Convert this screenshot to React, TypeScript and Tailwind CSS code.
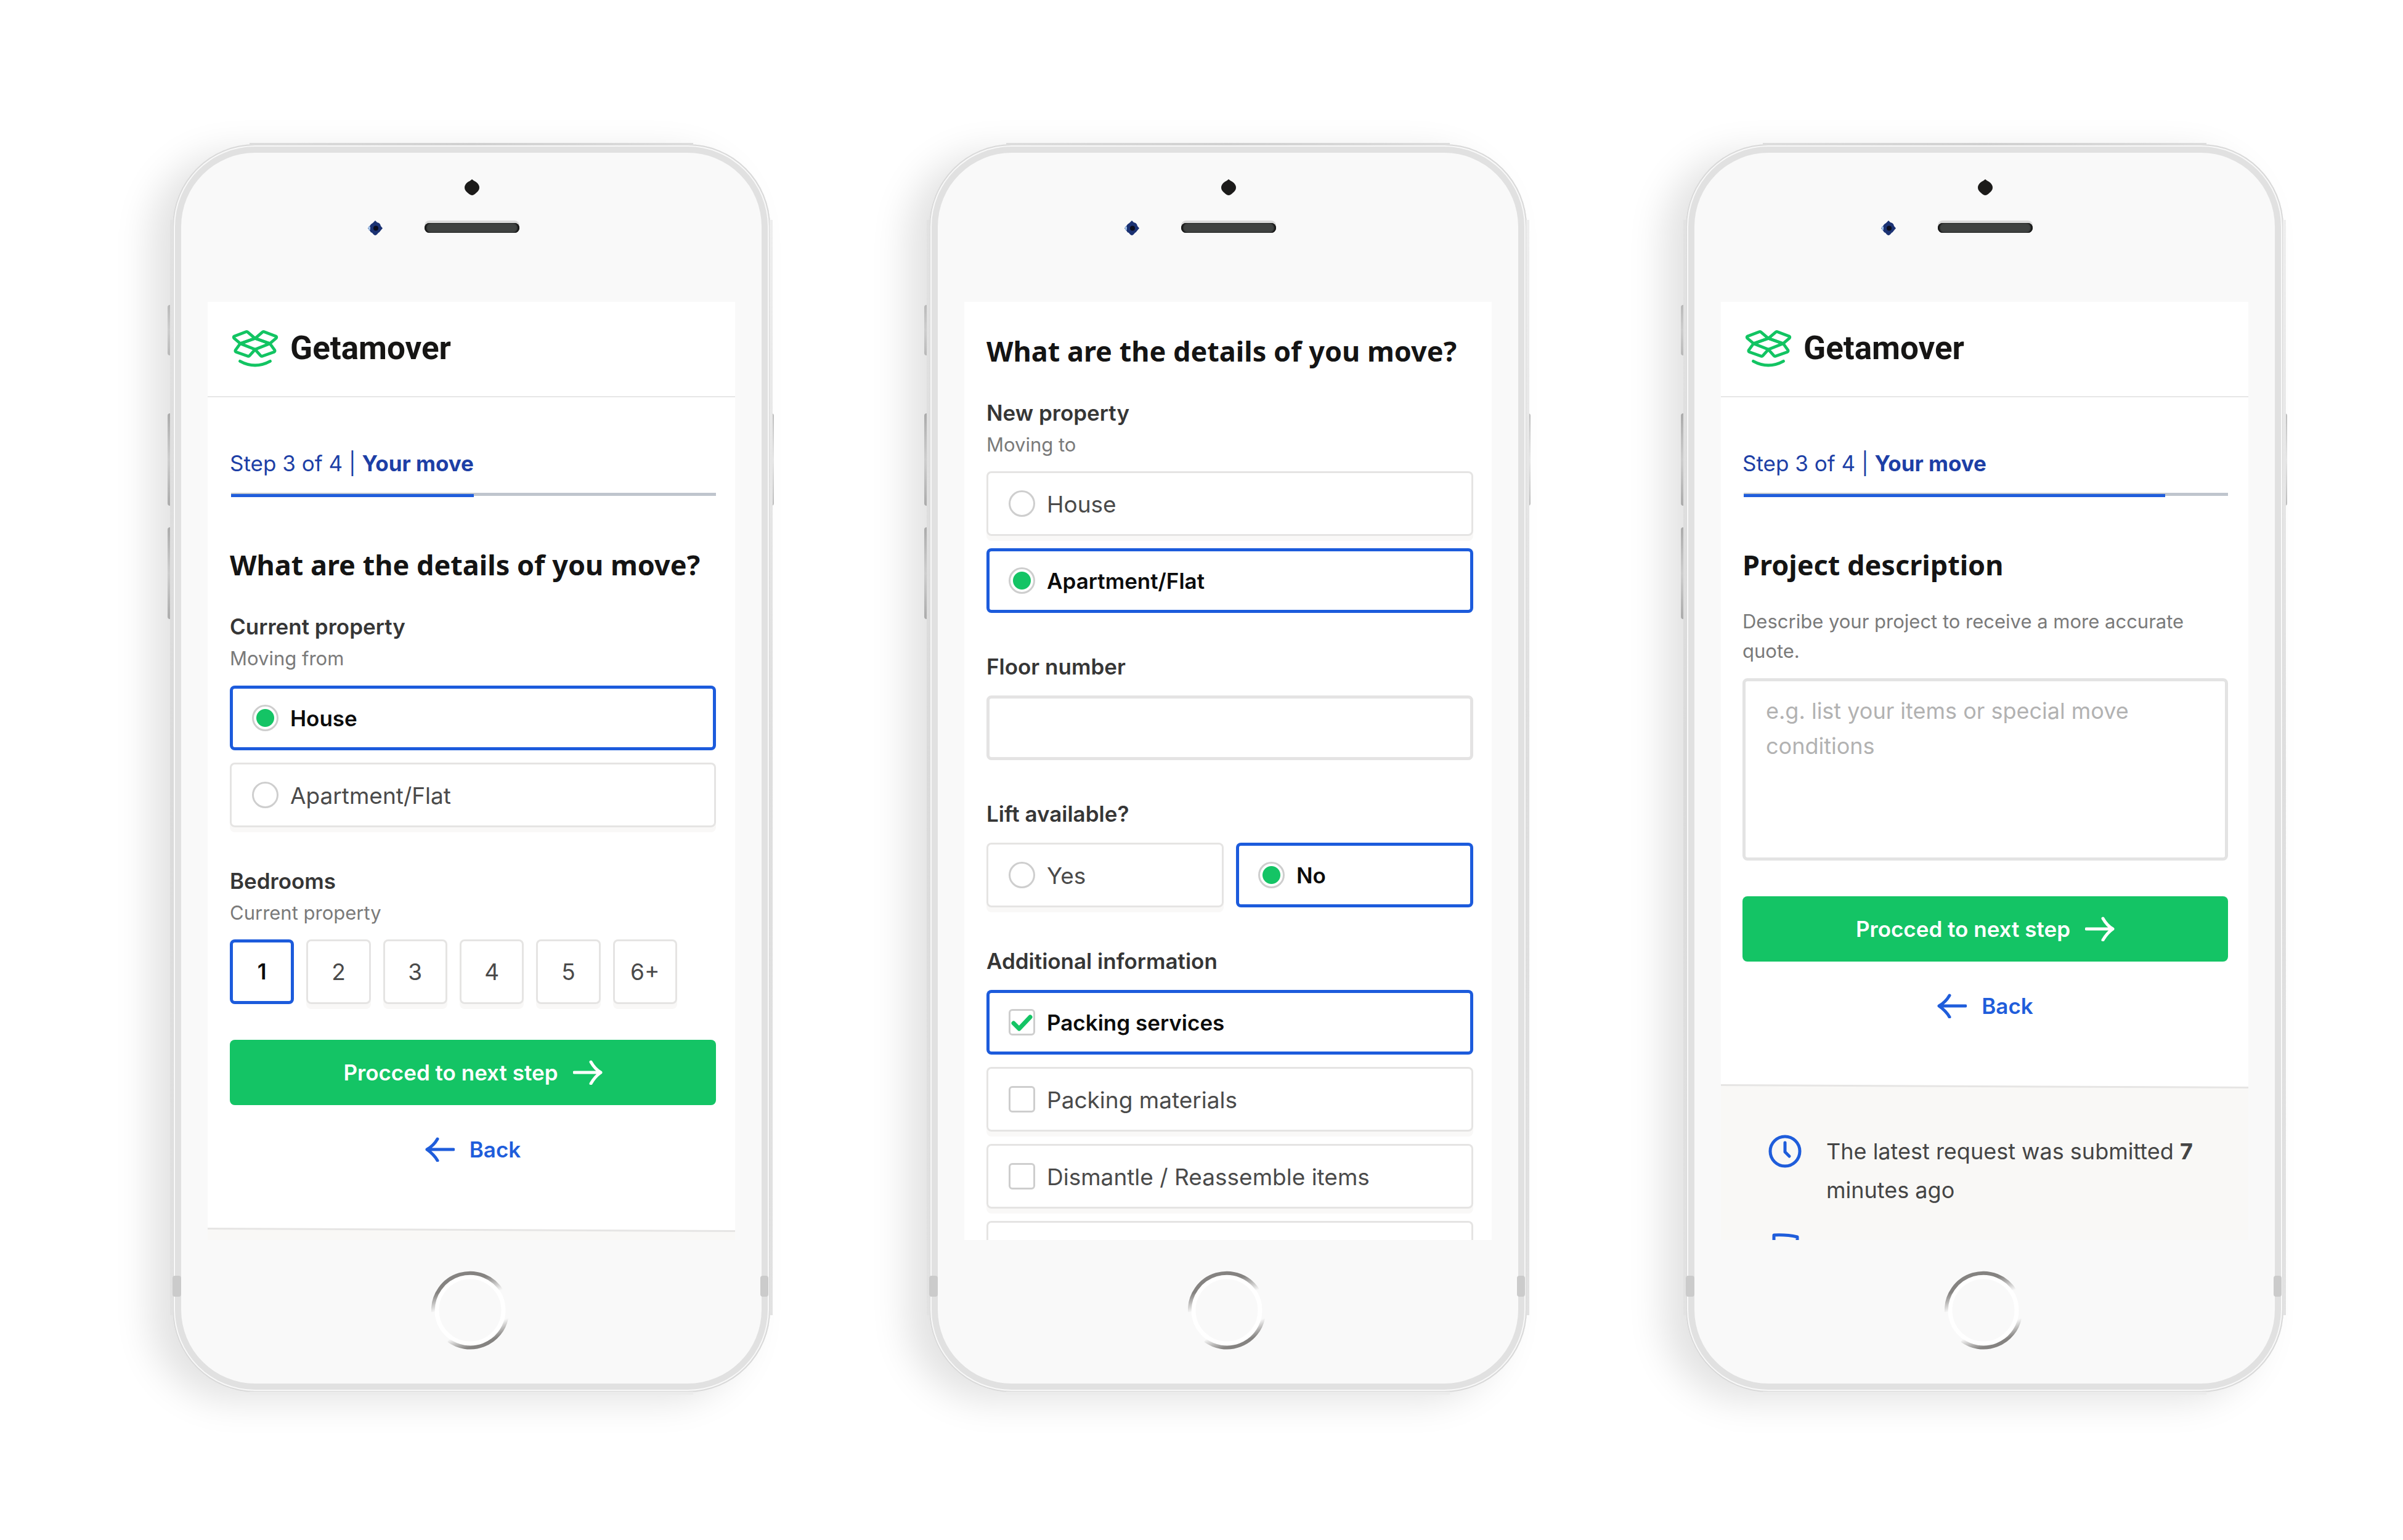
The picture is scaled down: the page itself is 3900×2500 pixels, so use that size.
import { useId, type ReactNode } from "react";

function Arrow({ back = false }: { back?: boolean }) {
  return (
    <svg viewBox="0 0 48 40" className="h-10 w-12 shrink-0" fill="none" stroke="currentColor" strokeWidth="5" strokeLinecap="round" strokeLinejoin="round" aria-hidden="true">
      <path d={back ? "M46 20H3M20 3C16 10 10 16 3 20C10 25 16 31 20 38" : "M2 20H45M29 3C33 10 38 16 45 20C38 25 33 31 29 38"} />
    </svg>
  );
}

function LogoMark() {
  return (
    <svg viewBox="0 0 80 63" className="h-[63px] w-20 shrink-0" fill="none" stroke="#12c462" strokeWidth="4.8" strokeLinecap="round" strokeLinejoin="round" aria-hidden="true">
      <path d="M41 15.3L29 5.2Q27.500 4 26 4.700L7.600 11.700Q5.200 13 6.800 15L17 23.700Z" />
      <path d="M41 15.300L53 5.200Q54.500 4 56 4.700L74.400 11.700Q76.800 13 75.200 15L65 23.700Z" />
      <path d="M41 15.300L17 23.700L41 33.300L65 23.700Z" />
      <path d="M17 23.700L9.200 34.300Q8.200 36.500 10.400 37.500L29.500 44.200Q31 44.700 32 43.400L41 33.300" />
      <path d="M65 23.700L72.800 34.300Q73.800 36.500 71.600 37.500L52.500 44.200Q51 44.700 50 43.400L41 33.300" />
      <path d="M16.500 52.300Q41 65.700 65.500 52.300" />
    </svg>
  );
}

function BrandHeader() {
  return (
    <header className="flex h-[155px] items-center gap-[18px] border-b-2 border-[#e6e6e6] pb-0.5 pl-9">
      <LogoMark />
      <span className="pb-0.5 font-['Roboto',sans-serif] text-[53px] leading-[60px] font-bold text-[#161514]">Getamover</span>
    </header>
  );
}

function StepProgress({ value }: { value: number }) {
  return (
    <div className="pt-20">
      <p className="text-[35px] leading-[54px] text-[#1d3fa6]">
        Step 3 of 4 | <b className="font-bold">Your move</b>
      </p>
      <div role="progressbar" aria-label="Progress" aria-valuenow={value} aria-valuemin={0} aria-valuemax={100} className="relative mt-[21px] ml-0.5 h-[5px] bg-[#bfc5cd]">
        <div className="absolute top-0.5 left-0 h-[5px] bg-[#1f5ddb]" style={{ width: `${value}%` }} />
      </div>
    </div>
  );
}

function Heading({ children }: { children: ReactNode }) {
  return <h2 className="font-['Noto_Sans',sans-serif] text-[45px] leading-[60px] font-bold whitespace-nowrap text-[#141414]">{children}</h2>;
}

function FieldTitle({ title, hint }: { title: string; hint?: string }) {
  return (
    <>
      <span className="block text-[35px] leading-[44px] font-semibold text-[#363636]">{title}</span>
      {hint && <span className="mt-2 block text-[31px] leading-[44px] text-[#7a7a7a]">{hint}</span>}
    </>
  );
}

type OptionProps = { kind: "radio" | "checkbox"; group: string; label: string; selected?: boolean };

function Option({ kind, group, label, selected = false }: OptionProps) {
  return (
    <label
      className={
        selected
          ? "flex h-[105px] items-center gap-[19px] rounded-lg px-9 text-[35px] font-semibold text-[#0c0c0c] shadow-[inset_0_0_0_5px_#1c5bdc]"
          : "flex h-[105px] items-center gap-[19px] rounded-lg px-9 text-[37px] text-[#4a4a4a] shadow-[inset_0_0_0_3px_#e5e4e3,0_8px_0_#f9f8f7]"
      }
    >
      {kind === "radio" ? (
        <input
          type="radio"
          name={group}
          defaultChecked={selected}
          className="size-[43px] shrink-0 appearance-none rounded-full border-[3px] border-[#cecece] bg-center bg-no-repeat checked:bg-[radial-gradient(circle,#14c465_14px,transparent_15px)]"
        />
      ) : (
        <span className="relative flex shrink-0">
          <input type="checkbox" name={group} defaultChecked={selected} className="peer size-[43px] appearance-none rounded-md border-[3px] border-[#cecece]" />
          <svg viewBox="0 0 43 43" className="pointer-events-none absolute inset-0 hidden peer-checked:block" fill="none" stroke="#14c465" strokeWidth="7" strokeLinecap="round" strokeLinejoin="round" aria-hidden="true">
            <path d="M8 23L17 32L35 13" />
          </svg>
        </span>
      )}
      <span className="pt-0.5 whitespace-nowrap">{label}</span>
    </label>
  );
}

function Actions() {
  return (
    <div className="mt-[58px] flex flex-col items-center">
      <button type="button" className="flex h-[106px] w-full items-center justify-center gap-6 rounded-lg bg-[#14c465] text-[35px] font-semibold text-white">
        Procced to next step
        <Arrow />
      </button>
      <a href="#back" className="mt-[50px] flex items-center gap-6 text-[35px] leading-[44px] font-semibold text-[#1f5ddb]">
        <Arrow back />
        Back
      </a>
    </div>
  );
}

function Facts({ children }: { children?: ReactNode }) {
  return (
    <footer className="mt-[105px]">
      <svg viewBox="0 0 856 8" preserveAspectRatio="none" className="block h-2 w-full" aria-hidden="true">
        <path d="M0 1L856 5V8H0Z" fill="#f9f8f6" />
        <path d="M0 1.500L856 5.500" stroke="#e6e5e4" strokeWidth="3" />
      </svg>
      <div className="min-h-[400px] bg-[#f9f8f6]">{children}</div>
    </footer>
  );
}

function HomeButton() {
  const id = useId();
  return (
    <button type="button" aria-label="Home" className="size-[130px] rounded-full">
      <svg viewBox="0 0 130 130" fill="none" aria-hidden="true">
        <defs>
          <linearGradient id={`${id}a`} gradientUnits="userSpaceOnUse" x1="60" y1="50" x2="51" y2="23">
            <stop offset="0" stopColor="#858381" stopOpacity="0" />
            <stop offset="1" stopColor="#858381" />
          </linearGradient>
          <linearGradient id={`${id}b`} gradientUnits="userSpaceOnUse" x1="77" y1="95" x2="85" y2="117">
            <stop offset="0" stopColor="#858381" stopOpacity="0" />
            <stop offset="1" stopColor="#858381" />
          </linearGradient>
        </defs>
        <circle cx="63" cy="65" r="54" stroke="#ffffff" strokeWidth="7" />
        <path d="M3 68A60 60 0 0 1 115 35" stroke={`url(#${id}a)`} strokeWidth="6" />
        <path d="M122 78A60 60 0 0 1 28 114" stroke={`url(#${id}b)`} strokeWidth="6" />
      </svg>
    </button>
  );
}

function Phone({ children }: { children: ReactNode }) {
  return (
    <section className="relative px-1 py-0.5">
      {/* hardware keys */}
      <i className="absolute top-[263px] -left-1 h-[82px] w-[7px] rounded-l bg-linear-to-b from-[#cccccc] via-[#e4e4e4] to-[#cccccc]" />
      <i className="absolute top-[439px] -left-1 h-[150px] w-[7px] rounded-l bg-linear-to-b from-[#bdbdbd] via-[#e4e4e4] to-[#bdbdbd]" />
      <i className="absolute top-[624px] -left-1 h-[149px] w-[7px] rounded-l bg-linear-to-b from-[#bdbdbd] via-[#e4e4e4] to-[#bdbdbd]" />
      <i className="absolute top-[439px] -right-0.5 h-[150px] w-2 rounded-r bg-linear-to-b from-[#bdbdbd] via-[#e8e8e8] to-[#bdbdbd]" />

      <div className="relative rounded-[134px] bg-[#f9f9f9] px-[57px] shadow-[inset_0_0_0_2px_#d9d9d9,inset_0_0_0_4px_#f8f8f8,inset_0_0_0_14px_#e1e1e1,-36px_14px_60px_rgba(0,0,0,0.115)]">
        {/* outer lips of the frame */}
        <i className="absolute top-[123px] bottom-[125px] -left-1 w-[5px] bg-linear-to-b from-[#e2e2e2] via-[#dadada] to-[#e2e2e2]" />
        <i className="absolute top-[123px] -right-1 bottom-[125px] w-[5px] bg-linear-to-b from-[#eeeeee] via-[#dedede] to-[#e2e2e2]" />
        <i className="absolute -top-0.5 right-[125px] left-[125px] h-1 bg-linear-to-r from-[#dddddd] via-[#d0d0d0] to-[#dddddd]" />
        <i className="absolute right-[125px] -bottom-1 left-[125px] h-[5px] bg-[#ebebeb]" />
        {/* antenna bands */}
        <i className="absolute bottom-[155px] left-0 h-[34px] w-[14px] rounded-sm bg-[#cbcbcb]" />
        <i className="absolute right-[3px] bottom-[155px] h-[34px] w-[13px] rounded-sm bg-[#cbcbcb]" />

        <div className="h-64 pt-[56px]">
          <div className="flex justify-center pl-0.5">
            <svg viewBox="0 0 26 28" className="block h-7 w-[26px]" aria-hidden="true">
              <path d="M13 1Q15 3 19 5Q25 9 25 14.500Q25 19 20 23Q16 27 13 27Q10 27 6 23Q1 19 1 14.500Q1 9 7 5Q11 3 13 1Z" fill="#1c1b1a" />
            </svg>
          </div>
          <div className="mt-10 grid grid-cols-[1fr_154px_1fr] items-center pl-0.5">
            <svg viewBox="0 0 24 24" className="mr-[68px] size-6 justify-self-end" aria-hidden="true">
              <path d="M12 0Q14 3 18 4Q21 6 21 9L24 12.500L21 16Q19 19 17 20Q14 24 12 24Q10 24 7 20Q4 19 3 16L0 12.500L3 9Q4 6 8 4Z" fill="#1b3273" />
              <path d="M1 9L4 10V15L1 16Z" fill="#9fbfe6" />
              <circle cx="13" cy="12.500" r="4" fill="#0a0d1e" />
            </svg>
            <span className="h-4 rounded-full bg-[#3f4241] shadow-[inset_3px_0_2px_#161616,inset_-3px_0_2px_#161616,0_-4px_0_#dadada]" />
          </div>
        </div>
        <div className="aspect-[856/1523] overflow-hidden bg-white">{children}</div>
        <div className="flex h-[247px] justify-center pt-[49px]">
          <div>
            <HomeButton />
          </div>
        </div>
      </div>
    </section>
  );
}

function CurrentPropertyScreen() {
  return (
    <>
      <BrandHeader />
      <form className="pr-[31px] pl-9">
        <StepProgress value={50} />
        <div className="mt-[82px]">
          <Heading>What are the details of you move?</Heading>
        </div>
        <fieldset className="mt-12">
          <legend className="contents">
            <FieldTitle title="Current property" hint="Moving from" />
          </legend>
          <div className="mt-[22px] flex flex-col gap-5">
            <Option kind="radio" group="from" label="House" selected />
            <Option kind="radio" group="from" label="Apartment/Flat" />
          </div>
        </fieldset>
        <fieldset className="mt-[65px]">
          <legend className="contents">
            <FieldTitle title="Bedrooms" hint="Current property" />
          </legend>
          <div className="mt-[21px] grid w-[92%] grid-cols-6 gap-5">
            {["1", "2", "3", "4", "5", "6+"].map((n, i) => (
              <button
                key={n}
                type="button"
                aria-pressed={i === 0}
                className={
                  i === 0
                    ? "h-[105px] rounded-lg text-[35px] font-semibold text-[#0c0c0c] shadow-[inset_0_0_0_5px_#1c5bdc]"
                    : "h-[105px] rounded-lg text-[37px] text-[#4a4a4a] shadow-[inset_0_0_0_3px_#e5e4e3,0_8px_0_#f9f8f7]"
                }
              >
                {n}
              </button>
            ))}
          </div>
        </fieldset>
        <Actions />
      </form>
      <Facts />
    </>
  );
}

function NewPropertyScreen() {
  return (
    <form className="pt-[50px] pr-[30px] pl-9">
      <Heading>What are the details of you move?</Heading>
      <fieldset className="mt-12">
        <legend className="contents">
          <FieldTitle title="New property" hint="Moving to" />
        </legend>
        <div className="mt-[21px] flex flex-col gap-5">
          <Option kind="radio" group="to" label="House" />
          <Option kind="radio" group="to" label="Apartment/Flat" selected />
        </div>
      </fieldset>
      <div className="mt-[65px]">
        <label htmlFor="floor">
          <FieldTitle title="Floor number" />
        </label>
        <input id="floor" type="text" className="mt-[25px] block h-[105px] w-full rounded-lg border-[5px] border-[#e4e3e3] px-8 text-[37px] text-[#4a4a4a] outline-none" />
      </div>
      <fieldset className="mt-[65px]">
        <legend className="contents">
          <FieldTitle title="Lift available?" />
        </legend>
        <div className="mt-[25px] grid grid-cols-2 gap-5">
          <Option kind="radio" group="lift" label="Yes" />
          <Option kind="radio" group="lift" label="No" selected />
        </div>
      </fieldset>
      <fieldset className="mt-[65px]">
        <legend className="contents">
          <FieldTitle title="Additional information" />
        </legend>
        <div className="mt-[25px] flex flex-col gap-5">
          <Option kind="checkbox" group="packing" label="Packing services" selected />
          <Option kind="checkbox" group="materials" label="Packing materials" />
          <Option kind="checkbox" group="dismantle" label="Dismantle / Reassemble items" />
          <Option kind="checkbox" group="extra" label="" />
        </div>
      </fieldset>
    </form>
  );
}

function DescriptionScreen() {
  return (
    <>
      <BrandHeader />
      <form className="pr-[33px] pl-[35px]">
        <StepProgress value={87} />
        <div className="mt-[82px]">
          <Heading>Project description</Heading>
        </div>
        <label htmlFor="description" className="mt-[38px] block text-[31px] leading-[48px] text-[#7a7a7a]">
          Describe your project to receive a more accurate quote.
        </label>
        <textarea
          id="description"
          placeholder="e.g. list your items or special move conditions"
          className="mt-5 block h-[296px] w-full resize-none rounded-lg border-[5px] border-[#e3e3e3] px-[33px] py-5 text-[36px] leading-[57px] outline-none placeholder:text-[#b2b2b2]"
        />
        <Actions />
      </form>
      <Facts>
        <ul className="flex flex-col gap-9 pt-[70px] pr-[33px] pl-[77px]">
          <li className="flex items-start gap-10">
            <svg viewBox="0 0 54 54" className="mt-1 size-[54px] shrink-0" fill="none" stroke="#1f5ddb" strokeWidth="5" strokeLinecap="round" strokeLinejoin="round" aria-hidden="true">
              <circle cx="27" cy="27" r="24" />
              <path d="M27 13V28L34 35" />
            </svg>
            <p className="text-[36px] leading-[63px] text-[#454545]">
              The latest request was submitted <b className="font-bold">7</b> minutes ago
            </p>
          </li>
          <li>
            <svg viewBox="0 0 54 54" className="size-[54px]" fill="none" stroke="#1f5ddb" strokeWidth="5" strokeLinecap="round" strokeLinejoin="round" aria-hidden="true">
              <path d="M9 50V5Q30 4 47 8V50Z" />
            </svg>
          </li>
        </ul>
      </Facts>
    </>
  );
}

export default function App() {
  return (
    <main className="grid min-h-screen grid-cols-3 items-start gap-[250px] bg-white pt-[232px] pr-[190px] pl-[276px] font-['Inter','Liberation_Sans',sans-serif]">
      <Phone>
        <CurrentPropertyScreen />
      </Phone>
      <Phone>
        <NewPropertyScreen />
      </Phone>
      <Phone>
        <DescriptionScreen />
      </Phone>
    </main>
  );
}
